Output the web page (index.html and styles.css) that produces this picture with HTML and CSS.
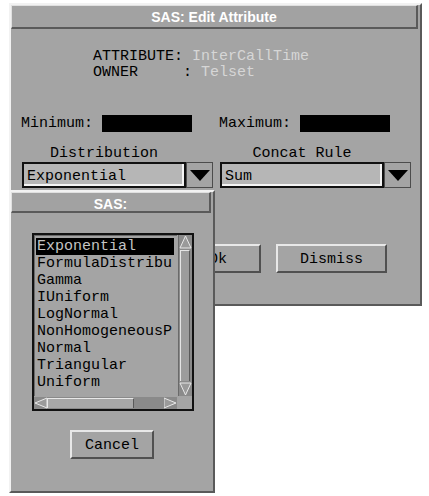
FILE: index.html
```html
<!DOCTYPE html>
<html lang="en">
<head>
  <meta charset="UTF-8" />
  <title>SAS: Edit Attribute</title>
  <link rel="stylesheet" href="styles.css">
</head>
<body>
  <div class="win main">
    <div class="titlebar">SAS: Edit Attribute</div>
    <div class="info">
      <div class="line">ATTRIBUTE: <span class="val">InterCallTime</span></div>
      <div class="line">OWNER     : <span class="val">Telset</span></div>
    </div>
    <div class="fields">
      <div class="field"><span class="field-label">Minimum:</span><span class="blk"></span></div>
      <div class="field"><span class="field-label">Maximum:</span><span class="blk"></span></div>
    </div>
    <div class="combos">
      <div class="combo">
        <div class="combo-label">Distribution</div>
        <div class="combo-row">
          <div class="combo-text">Exponential</div>
          <div class="combo-arrow"><svg width="20" height="11" viewBox="0 0 20 11"><polygon points="0,0 20,0 10,11" fill="#000"/></svg></div>
        </div>
      </div>
      <div class="combo">
        <div class="combo-label">Concat Rule</div>
        <div class="combo-row">
          <div class="combo-text">Sum</div>
          <div class="combo-arrow"><svg width="20" height="11" viewBox="0 0 20 11"><polygon points="0,0 20,0 10,11" fill="#000"/></svg></div>
        </div>
      </div>
    </div>
    <div class="buttons">
      <div class="btn btn-ok">Ok</div>
      <div class="btn btn-dismiss">Dismiss</div>
    </div>
  </div>

  <!-- popup picker over the dialog -->
  <div class="win popup">
    <div class="titlebar small">SAS:</div>
    <div class="listbox">
      <div class="items">
        <div class="item selected">Exponential</div>
        <div class="item">FormulaDistribu</div>
        <div class="item">Gamma</div>
        <div class="item">IUniform</div>
        <div class="item">LogNormal</div>
        <div class="item">NonHomogeneousP</div>
        <div class="item">Normal</div>
        <div class="item">Triangular</div>
        <div class="item">Uniform</div>
      </div>
      <div class="vscroll">
        <svg class="sarrow" width="13" height="14" viewBox="0 0 13 14"><polygon points="6.5,1 12,13 1,13" fill="#9a9a9a" stroke="#e8e8e8" stroke-width="1"/></svg>
        <div class="vthumb"></div>
        <svg class="sarrow" width="13" height="14" viewBox="0 0 13 14"><polygon points="1,1 12,1 6.5,13" fill="#9a9a9a" stroke="#e8e8e8" stroke-width="1"/></svg>
      </div>
      <div class="hscroll">
        <svg class="sarrow" width="13" height="12" viewBox="0 0 13 12"><polygon points="1,6 13,1 13,11" fill="#9a9a9a" stroke="#e8e8e8" stroke-width="1"/></svg>
        <div class="hthumb"></div>
        <div class="htrack"></div>
        <svg class="sarrow" width="13" height="12" viewBox="0 0 13 12"><polygon points="0,1 12,6 0,11" fill="#9a9a9a" stroke="#e8e8e8" stroke-width="1"/></svg>
      </div>
      <div class="corner"></div>
    </div>
    <div class="btn btn-cancel">Cancel</div>
  </div>
</body>
</html>
```

FILE: styles.css
```css
body {
  margin: 0;
  background: #fff;
  font-family: "Liberation Mono", monospace;
  font-size: 15px;
  color: #000;
  position: relative;
  height: 496px;
  overflow: hidden;
}

/* window frame */
.win {
  box-sizing: border-box;
  background: #a4a4a4;
  border-top: 2px solid #f2f2f2;
  border-left: 2px solid #f2f2f2;
  border-right: 2px solid #5a5a5a;
  border-bottom: 2px solid #5a5a5a;
}
.main {
  margin: 3px 0 0 9px;
  width: 413px;
  height: 303px;
}
.titlebar {
  box-sizing: border-box;
  height: 24px;
  margin-right: 2px;
  padding-top: 1px;
  border-top: 1px solid #e0e0e0;
  border-left: 1px solid #e0e0e0;
  border-right: 2px solid #5a5a5a;
  border-bottom: 2px solid #5a5a5a;
  background: #a2a2a2;
  color: #fff;
  font-family: "Liberation Sans", Arial, sans-serif;
  font-weight: bold;
  font-size: 14px;
  display: flex;
  align-items: center;
  justify-content: center;
}
.titlebar.small {
  height: 21px;
  padding-top: 3px;
}

/* attribute info */
.info {
  margin-top: 20px;
  padding-left: 82px;
  line-height: 16px;
}
.line {
  white-space: pre;
}
.val {
  color: #d6d6d6;
}

/* min / max */
.fields {
  margin-top: 33px;
  padding-left: 10px;
  display: flex;
  gap: 27px;
}
.field {
  display: flex;
  align-items: center;
  gap: 9px;
  height: 17px;
  padding-top: 1px;
}
.blk {
  width: 90px;
  height: 17px;
  background: #000;
  margin-top: -1px;
}

/* combo boxes */
.combos {
  margin-top: 13px;
  padding-left: 11px;
  display: flex;
  gap: 7px;
}
.combo-label {
  width: 164px;
  text-align: center;
  line-height: 16px;
  padding-top: 2px;
  margin-top: -1px;
}
.combo-row {
  display: flex;
  height: 26px;
}
.combo-text {
  box-sizing: border-box;
  width: 164px;
  height: 26px;
  background: #b6b6b6;
  border: 2px solid #111;
  box-shadow: inset -2px -2px 0 #f4f4f4;
  padding: 2px 0 0 3px;
  line-height: 21px;
}
.combo-arrow {
  box-sizing: border-box;
  width: 27px;
  height: 26px;
  border: 1px solid #4c4c4c;
  background: #a4a4a4;
  display: flex;
  align-items: center;
  justify-content: center;
  padding-top: 1px;
}

/* push buttons */
.buttons {
  margin-top: 56px;
  padding-left: 164px;
  display: flex;
  gap: 15px;
}
.btn {
  box-sizing: border-box;
  height: 29px;
  padding-top: 1px;
  display: flex;
  align-items: center;
  justify-content: center;
  border-top: 2px solid #e8e8e8;
  border-left: 2px solid #e8e8e8;
  border-right: 2px solid #505050;
  border-bottom: 2px solid #505050;
}
.btn-ok { width: 86px; }
.btn-dismiss { width: 111px; }

/* SAS: popup list */
.popup {
  position: absolute;
  left: 9px;
  top: 190px;
  width: 206px;
  height: 303px;
}
.listbox {
  margin: 20px 0 0 21px;
  width: 162px;
  box-sizing: border-box;
  border: 2px solid #111;
  display: grid;
  grid-template-columns: 143px 15px;
  grid-template-rows: 161px 13px;
  background: #a4a4a4;
}
.items {
  padding: 2px 0 0 1px;
  border-top: 1px solid #6a6a6a;
  border-left: 1px solid #6a6a6a;
}
.item {
  height: 17px;
  line-height: 17px;
  padding-left: 1px;
  white-space: nowrap;
  overflow: hidden;
}
.item.selected {
  background: #000;
  color: #c4c4c4;
  width: 137px;
}
.vscroll {
  display: flex;
  flex-direction: column;
  background: #8a8a8a;
  border-left: 1px solid #6a6a6a;
  margin-left: 1px;
}
.vthumb {
  flex: 1;
  margin: 1px 2px 1px 1px;
  background: #9c9c9c;
  border-left: 1px solid #e4e4e4;
  border-top: 1px solid #e4e4e4;
  border-right: 1px solid #5a5a5a;
}
.hscroll {
  display: flex;
  background: #8a8a8a;
  margin-top: 1px;
}
.hthumb {
  width: 85px;
  margin: 1px 0;
  background: #a8a8a8;
  border-top: 1px solid #e8e8e8;
  border-left: 1px solid #e8e8e8;
  border-right: 1px solid #5a5a5a;
}
.htrack {
  flex: 1;
}
.corner {
  background: #a4a4a4;
}
.btn-cancel {
  width: 84px;
  margin: 19px 0 0 59px;
}
```
